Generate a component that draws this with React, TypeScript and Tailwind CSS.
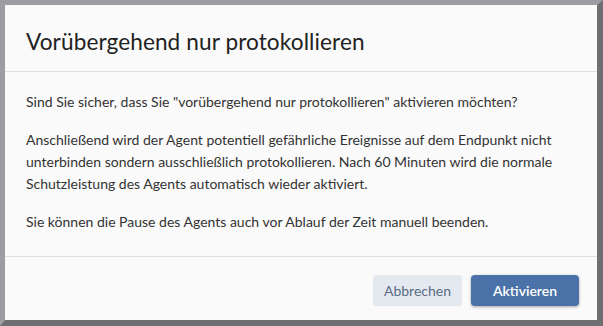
import { FC } from 'react';

/**
 * Confirmation dialog for temporarily switching the agent to log-only mode.
 */
const App: FC = () => {
  return (
    <div className="w-[603px] h-[326px] bg-[#6e6e73] overflow-hidden">
      <div
        className="flex flex-col h-full bg-[#fafafa] border-t-[5px] border-l-[5px] border-r-[6px] border-b-[6px] border-t-[#9c9da2] border-l-[#9c9da2] border-r-[#6e6e73] border-b-[#6e6e73] text-[#333]"
        style={{ fontFamily: 'Lato, "Open Sans", sans-serif' }}
      >
        {/* Header */}
        <div className="h-[67px] flex items-center pt-[7px] px-[21px] border-b border-[#dedede]">
          <h2 className="text-[22.6px] text-[#222] tracking-[0.1px]">Vorübergehend nur protokollieren</h2>
        </div>

        {/* Body */}
        <div className="flex-1 px-[21px] pt-[19px] text-[14px] leading-[22px] text-[#333]">
          <p>Sind Sie sicher, dass Sie "vorübergehend nur protokollieren" aktivieren möchten?</p>
          <p className="mt-[16px]">
            Anschließend wird der Agent potentiell gefährliche Ereignisse auf dem Endpunkt nicht unterbinden sondern
            ausschließlich protokollieren. Nach 60 Minuten wird die normale Schutzleistung des Agents automatisch
            wieder aktiviert.
          </p>
          <p className="mt-[16px]">Sie können die Pause des Agents auch vor Ablauf der Zeit manuell beenden.</p>
        </div>

        {/* Footer */}
        <div className="h-[64px] flex items-center justify-end gap-[9px] pt-[4px] px-[18px] border-t border-[#dedede]">
          <button className="h-[31px] w-[89px] rounded-[3px] bg-[#e4e9f0] text-[#5b6c86] text-[14px]">
            Abbrechen
          </button>
          <button className="h-[31px] w-[108px] rounded-[4px] bg-[#4a72a8] text-white text-[14px] font-semibold shadow-[0_1px_3px_rgba(0,0,0,0.35)]">
            Aktivieren
          </button>
        </div>
      </div>
    </div>
  );
};

export default App;
